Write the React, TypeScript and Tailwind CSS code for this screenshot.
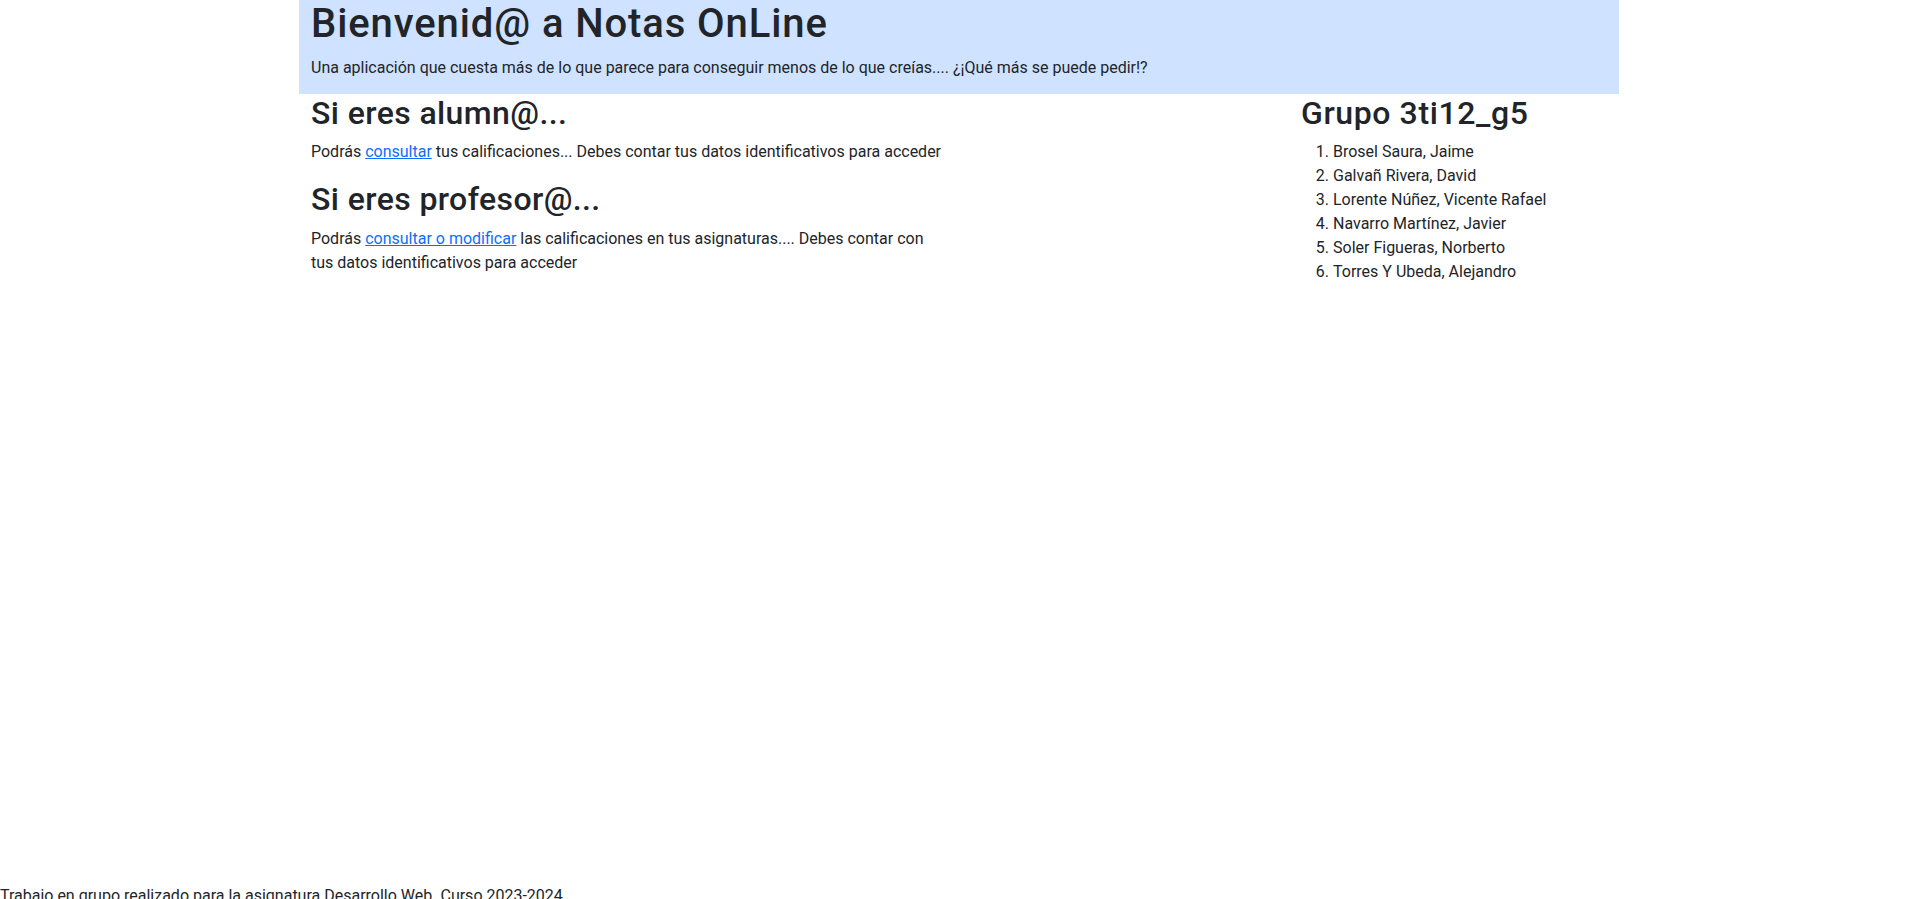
const alumnos = [
  "Brosel Saura, Jaime",
  "Galvañ Rivera, David",
  "Lorente Núñez, Vicente Rafael",
  "Navarro Martínez, Javier",
  "Soler Figueras, Norberto",
  "Torres Y Ubeda, Alejandro",
];

export default function App() {
  return (
    <div className="font-['Roboto','Liberation_Sans',sans-serif] text-[#212529] text-base leading-6 bg-white">
      <div className="min-h-[884px]">
        {/* Cabecera */}
        <header className="ml-[299px] w-[1320px] h-[94px] bg-[#cfe2ff] px-3">
          <h1 className="text-[40px] leading-[48px] font-medium tracking-[0.9px] mb-2">Bienvenid@ a Notas OnLine</h1>
          <p>
            Una aplicación que cuesta más de lo que parece para conseguir menos de lo que creías.... ¿¡Qué más se puede pedir!?
          </p>
        </header>

        <main className="ml-[299px] w-[1320px] px-3 flex justify-between">
          <div className="w-[625px]">
            <h2 className="text-[32px] leading-[38.4px] font-medium tracking-[0.4px] mb-2">Si eres alumn@...</h2>
            <p className="mb-4 whitespace-nowrap">
              Podrás{" "}
              <a href="#" className="text-[#0d6efd] underline">
                consultar
              </a>{" "}
              tus calificaciones... Debes contar tus datos identificativos para acceder
            </p>
            <h2 className="text-[32px] leading-[38.4px] font-medium tracking-[0.4px] mb-2">Si eres profesor@...</h2>
            <p className="mb-4">
              Podrás{" "}
              <a href="#" className="text-[#0d6efd] underline">
                consultar o modificar
              </a>{" "}
              las calificaciones en tus asignaturas.... Debes contar con tus datos identificativos para acceder
            </p>
          </div>

          <div className="w-[306px]">
            <h2 className="text-[32px] leading-[38.4px] font-medium tracking-[0.6px] mb-2">Grupo 3ti12_g5</h2>
            <ol className="list-decimal pl-8 mb-4">
              {alumnos.map((a) => (
                <li key={a}>{a}</li>
              ))}
            </ol>
          </div>
        </main>
      </div>

      <footer>Trabajo en grupo realizado para la asignatura Desarrollo Web. Curso 2023-2024</footer>
    </div>
  );
}
